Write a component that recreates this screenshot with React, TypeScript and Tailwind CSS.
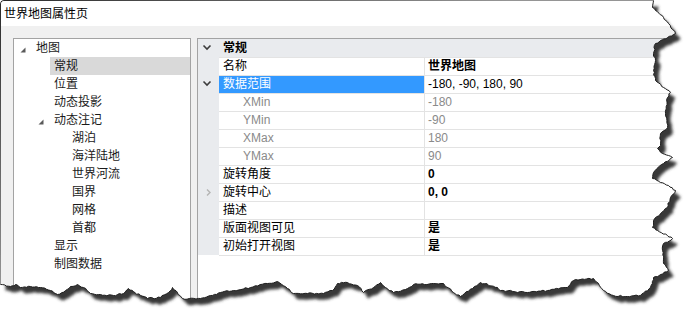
import React from "react";

type Pt = [number, number];

const EDGE: Pt[] = [
  [653, 0], [652, 7], [655, 10], [663, 17], [668, 23], [675, 33], [667, 37], [660, 40], [655, 43], [653, 53],
  [655, 60], [653, 70], [655, 80], [663, 87], [670, 92], [667, 97], [665, 113], [667, 127], [660, 133], [660, 145],
  [657, 148], [662, 153], [672, 157], [663, 163], [653, 172], [652, 178], [660, 182], [668, 185], [675, 190],
  [670, 197], [667, 207], [660, 213], [653, 220], [652, 227], [657, 230], [667, 235], [672, 238], [663, 243],
  [662, 250], [663, 263], [668, 270], [660, 274], [653, 277], [650, 287], [640, 295], [627, 296], [613, 295],
  [603, 290], [593, 278], [573, 280], [567, 287], [547, 290], [527, 292], [500, 290], [497, 287], [480, 282],
  [460, 296], [453, 292], [443, 283], [433, 283], [413, 284], [407, 288], [393, 292], [385, 287], [380, 282],
  [373, 287], [363, 292], [357, 285], [347, 282], [337, 283], [332, 290], [323, 293], [307, 293], [293, 293],
  [287, 288], [277, 281], [267, 283], [250, 287], [233, 290], [220, 292], [210, 295], [200, 298], [182, 298],
  [177, 292], [172, 287], [168, 292], [160, 297], [147, 298], [140, 295], [133, 291], [128, 288], [123, 293],
  [113, 295], [100, 294], [90, 293], [83, 287], [77, 284], [70, 286], [65, 290], [57, 294], [50, 290], [40, 287],
  [30, 286], [20, 287], [15, 284], [10, 286], [0, 284],
];

function jagged(points: Pt[]): Pt[] {
  let seed = 7;
  const rnd = () => {
    seed = (seed * 9301 + 49297) % 233280;
    return seed / 233280;
  };
  const out: Pt[] = [points[0]];
  for (let i = 1; i < points.length; i++) {
    const [x0, y0] = points[i - 1];
    const [x1, y1] = points[i];
    const len = Math.hypot(x1 - x0, y1 - y0);
    const n = Math.max(1, Math.ceil(len / 2.5));
    const nx = -(y1 - y0) / (len || 1);
    const ny = (x1 - x0) / (len || 1);
    for (let k = 1; k < n; k++) {
      const t = k / n;
      const j = (rnd() - 0.5) * 1.6;
      out.push([x0 + (x1 - x0) * t + nx * j, y0 + (y1 - y0) * t + ny * j]);
    }
    out.push([x1, y1]);
  }
  return out;
}

const JAG = jagged(EDGE);
const edgeD = "M" + JAG.map(([x, y]) => `${(x + 0.5).toFixed(1)} ${(y + 0.5).toFixed(1)}`).join(" L");
const shapeD = `M0 4 Q0 0 4 0 ` + JAG.map(([x, y]) => `L${(x + 0.5).toFixed(1)} ${(y + 0.5).toFixed(1)}`).join(" ") + " Z";

const FONT = "font-['Liberation_Sans','Noto_Sans_CJK_SC',sans-serif]";

type TreeItem = { t: string; lvl: 0 | 1 | 2; exp?: boolean; sel?: boolean };
const TREE: TreeItem[] = [
  { t: "地图", lvl: 0, exp: true },
  { t: "常规", lvl: 1, sel: true },
  { t: "位置", lvl: 1 },
  { t: "动态投影", lvl: 1 },
  { t: "动态注记", lvl: 1, exp: true },
  { t: "湖泊", lvl: 2 },
  { t: "海洋陆地", lvl: 2 },
  { t: "世界河流", lvl: 2 },
  { t: "国界", lvl: 2 },
  { t: "网格", lvl: 2 },
  { t: "首都", lvl: 2 },
  { t: "显示", lvl: 1 },
  { t: "制图数据", lvl: 1 },
];

const INDENT: Record<number, string> = { 0: "w-[18px]", 1: "w-[36px]", 2: "w-[54px]" };

type Row = {
  name: string;
  value: string;
  bold?: boolean;
  sub?: boolean;
  sel?: boolean;
  chev?: "down" | "right";
};

const ROWS: Row[] = [
  { name: "名称", value: "世界地图", bold: true },
  { name: "数据范围", value: "-180, -90, 180, 90", sel: true, chev: "down" },
  { name: "XMin", value: "-180", sub: true },
  { name: "YMin", value: "-90", sub: true },
  { name: "XMax", value: "180", sub: true },
  { name: "YMax", value: "90", sub: true },
  { name: "旋转角度", value: "0", bold: true },
  { name: "旋转中心", value: "0, 0", bold: true, chev: "right" },
  { name: "描述", value: "" },
  { name: "版面视图可见", value: "是", bold: true },
  { name: "初始打开视图", value: "是", bold: true },
];

function Chevron({ dir }: { dir?: "down" | "right" }) {
  if (!dir) return null;
  if (dir === "down")
    return (
      <svg width="21" height="18" viewBox="0 0 21 18">
        <polyline points="5.5,6.5 9,10 12.5,6.5" fill="none" stroke="#3c3c3c" strokeWidth="1.6" />
      </svg>
    );
  return (
    <svg width="21" height="18" viewBox="0 0 21 18">
      <polyline points="9,6.5 12,9.5 9,12.5" fill="none" stroke="#b4b4b4" strokeWidth="1.4" />
    </svg>
  );
}

function Tri() {
  return (
    <svg width="6" height="6" viewBox="0 0 6 6" className="mt-[3px]">
      <polygon points="5.5,0.5 5.5,5.5 0.5,5.5" fill="#5a5a5a" />
    </svg>
  );
}

export default function App() {
  return (
    <div className={`relative w-[697px] h-[324px] bg-white overflow-hidden text-[12px] text-black ${FONT}`}>
      <div className="w-[697px] h-[324px] bg-[#f0f0f0] border-l border-t border-[#2b2b2b] rounded-tl-[4px] flex flex-col">
        <div className="h-[25px] bg-white pl-[3px] flex items-center leading-[18px] rounded-tl-[4px]">
          世界地图属性页
        </div>
        <div className="flex flex-1 pt-[12px] pl-[12px] gap-[6px]">
          {/* tree */}
          <div className="w-[178px] border border-[#a3a3a3] bg-white flex flex-col">
            {TREE.map((it, i) => (
              <div key={i} className="flex h-[18px] leading-[18px]">
                <div className={`${INDENT[it.lvl]} flex items-center justify-end pr-[6px] shrink-0`}>
                  {it.exp ? <Tri /> : null}
                </div>
                <div className={`flex-1 pl-[4px] text-[#1a1a1a] ${it.sel ? "bg-[#d9d9d9]" : ""}`}>{it.t}</div>
              </div>
            ))}
          </div>
          {/* property grid */}
          <div className="flex-1 border-l border-t border-[#a3a3a3] bg-white flex flex-col">
            <div className="h-[18px] flex bg-[#e9ebee] leading-[18px]">
              <div className="w-[21px] shrink-0">
                <Chevron dir="down" />
              </div>
              <div className="pl-[4px] font-bold">常规</div>
            </div>
            {ROWS.map((r, i) => (
              <div key={i} className="flex h-[18px]">
                <div className="w-[21px] shrink-0 bg-[#e9ebee]">
                  <Chevron dir={r.chev} />
                </div>
                <div className="flex-1 flex border-t border-[#e3e3e3] leading-[17px]">
                  <div
                    className={`w-[205px] shrink-0 ${r.sub ? "pl-[24px] text-[#8a8a8a]" : "pl-[4px]"} ${
                      r.sel ? "bg-[#3399ff] text-white" : ""
                    }`}
                  >
                    {r.name}
                  </div>
                  <div
                    className={`flex-1 border-l border-[#e3e3e3] pl-[3px] ${r.bold ? "font-bold" : ""} ${
                      r.sub ? "text-[#8a8a8a]" : "text-black"
                    }`}
                  >
                    {r.value}
                  </div>
                </div>
              </div>
            ))}
            <div className="ml-[21px] border-t border-[#e3e3e3]" />
          </div>
        </div>
      </div>
      <svg
        className="absolute inset-0 pointer-events-none"
        width="697"
        height="324"
        viewBox="0 0 697 324"
      >
        <defs>
          <clipPath id="outside">
            <path d={`M0 0H697V324H0Z ${shapeD}`} clipRule="evenodd" />
          </clipPath>
          <filter id="blur" x="-10%" y="-10%" width="120%" height="120%">
            <feGaussianBlur stdDeviation="1.4" />
          </filter>
        </defs>
        <path d={`M0 0H697V324H0Z ${shapeD}`} fillRule="evenodd" fill="#ffffff" />
        <g clipPath="url(#outside)">
          <path d={shapeD} transform="translate(5 6)" fill="#383838" filter="url(#blur)" />
        </g>
        <path d={edgeD} fill="none" stroke="#1e1e1e" strokeWidth="1" />
      </svg>
    </div>
  );
}
